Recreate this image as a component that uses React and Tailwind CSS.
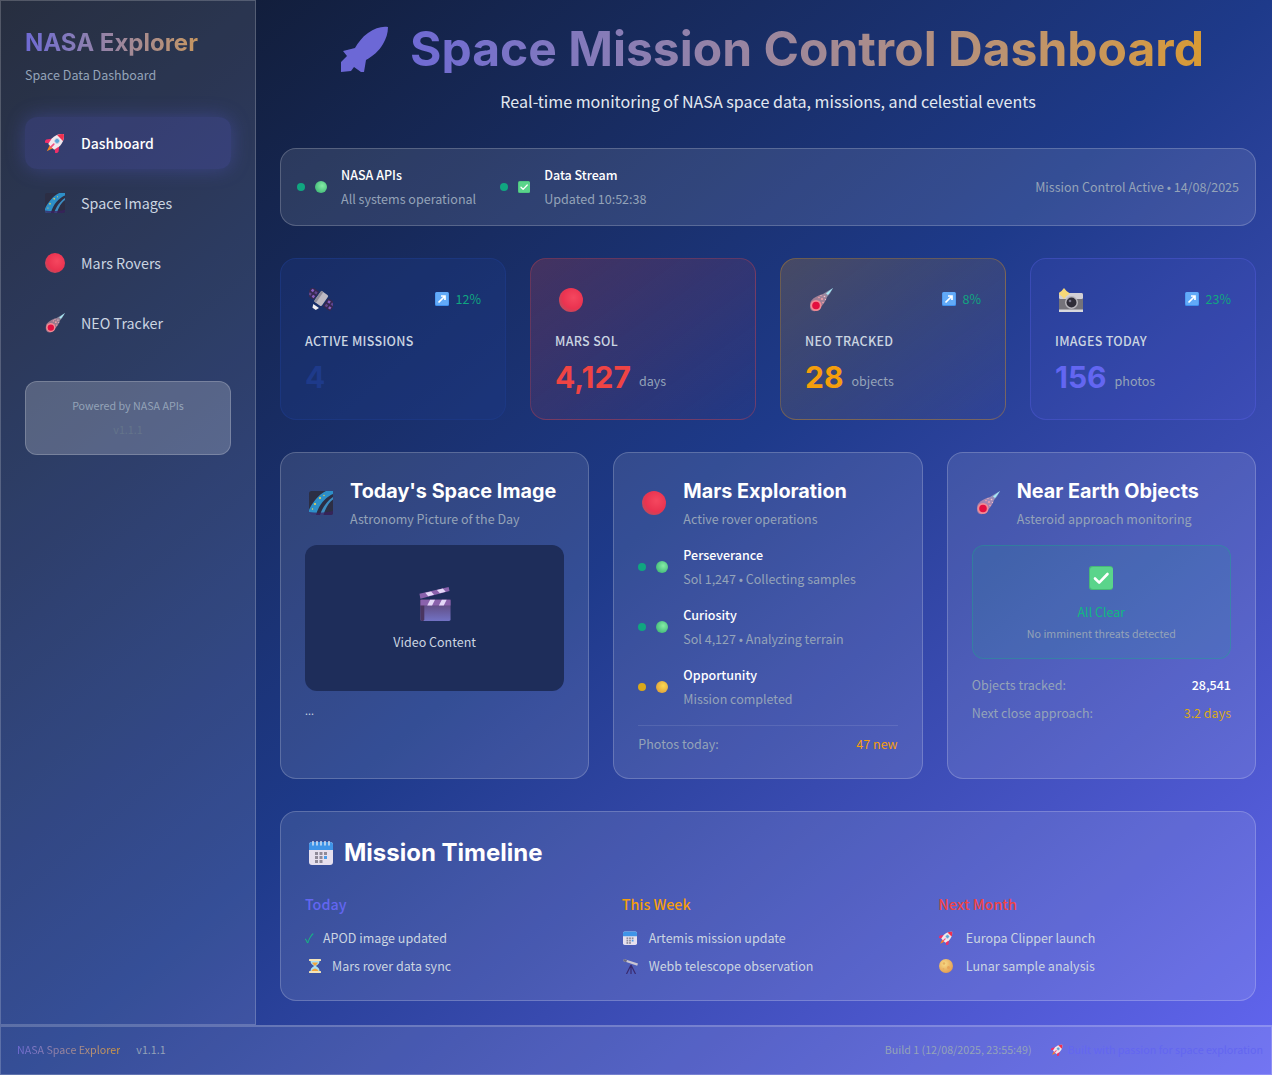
import React from "react";

const grad = "bg-gradient-to-r from-[#6f6ad4] to-[#d89a32] bg-clip-text text-transparent";

// emoji style icons, drawn by hand
const RedBall = ({ className }) => (
    <svg viewBox="0 0 24 24" className={className}>
        <defs>
            <radialGradient id="redball" cx="0.6" cy="0.4" r="0.65">
                <stop offset="0" stopColor="#f5475f" />
                <stop offset="0.7" stopColor="#ea3350" />
                <stop offset="1" stopColor="#bf4a5c" />
            </radialGradient>
        </defs>
        <circle cx="12" cy="12" r="12" fill="url(#redball)" />
    </svg>
);

const GreenBall = ({ className }) => (
    <svg viewBox="0 0 12 12" className={className}>
        <defs>
            <radialGradient id="greenball" cx="0.6" cy="0.4" r="0.65">
                <stop offset="0" stopColor="#86eba6" />
                <stop offset="1" stopColor="#42ba78" />
            </radialGradient>
        </defs>
        <circle cx="6" cy="6" r="6" fill="url(#greenball)" />
    </svg>
);

const YellowBall = ({ className }) => (
    <svg viewBox="0 0 12 12" className={className}>
        <defs>
            <radialGradient id="yellowball" cx="0.6" cy="0.4" r="0.65">
                <stop offset="0" stopColor="#fbd850" />
                <stop offset="1" stopColor="#e0a23c" />
            </radialGradient>
        </defs>
        <circle cx="6" cy="6" r="6" fill="url(#yellowball)" />
    </svg>
);

const CheckBox = ({ className }) => (
    <svg viewBox="0 0 24 24" className={className}>
        <rect width="24" height="24" rx="3" fill="#47b877" />
        <rect x="1" y="1" width="23" height="22" rx="3" fill="#5ad48b" />
        <path d="M6 12.5l4.2 4.2L18.5 8" fill="none" stroke="#fff" strokeWidth="2.6" strokeLinecap="round" strokeLinejoin="round" />
    </svg>
);

const Rocket = ({ className }) => (
    <svg viewBox="0 0 24 24" className={className}>
        <g transform="rotate(45 12 12)">
            <path d="M9 17h6L12 26z" fill="#f58220" />
            <path d="M6.500 10L1.500 16.500 2 21.500 7.500 17z" fill="#ef2f68" />
            <path d="M17.500 10l5 6.500-.5 5-5.500-4.500z" fill="#ef2f68" />
            <path d="M12 -3C17 1 18.500 6 18.500 11L17 18.500H7L5.500 11C5.500 6 7 1 12 -3z" fill="#f1e6ed" />
            <path d="M12 -3C14.400 -1 16 1 17 3.500H7C8 1 9.600 -1 12 -3z" fill="#f0304f" />
            <circle cx="12" cy="8.500" r="3" fill="#5aa3d6" stroke="#c5d3e4" strokeWidth="1" />
            <rect x="11" y="13" width="2" height="7" rx="1" fill="#ef4f80" />
        </g>
    </svg>
);

const TitleRocket = ({ className }) => (
    <svg viewBox="0 0 47 47" className={className}>
        <path d="M47 1C41 0 34 2 27 7C21 11 17 17 14 22L2 25L6 30L0 36V46L10 45L13 41L20 46H23L25 34C32 30 38 25 42 18C45 13 47 7 47 1Z" fill="#6c68d6" />
    </svg>
);

const Galaxy = ({ className }) => (
    <svg viewBox="0 0 24 24" className={className}>
        <rect width="24" height="24" rx="2.5" fill="#2c2e44" />
        <path d="M0 19C3 12 10 3 17 0h7v3C17 6 10 13 7 24H2.5Q0 24 0 21.5z" fill="#2d8fc8" />
        <path d="M11 24C13 17 18 10 24 6v2.5C20 11 16 18 14.5 24z" fill="#3d8cc0" />
        <path d="M0 21v.5Q0 24 2.5 24h19q2.500 0 2.500-2.500V20C16 22 8 22 0 21z" fill="#3a2260" opacity="0.75" />
        <circle cx="11" cy="7" r="1" fill="#f4d44a" />
        <circle cx="15" cy="4.500" r="0.7" fill="#f4d44a" />
        <circle cx="6" cy="13" r="1" fill="#f4d44a" />
        <circle cx="3.500" cy="18" r="0.7" fill="#f4d44a" />
    </svg>
);

const Comet = ({ className }) => (
    <svg viewBox="0 0 24 24" className={className}>
        <defs>
            <linearGradient id="cometTail" x1="0" y1="1" x2="1" y2="0">
                <stop offset="0" stopColor="#f59aa2" />
                <stop offset="0.6" stopColor="#f3b4bc" />
                <stop offset="1" stopColor="#9fe6f5" />
            </linearGradient>
        </defs>
        <path d="M2 13C5 9 10 7 14 6L18 3.500L24 0L21 5.500L18 9C17 13 14 17 10 21C7 24 3 24 1.500 21C.5 19 1 15 2 13z" fill="url(#cometTail)" opacity="0.55" />
        <path d="M17 5.500L24 0L19 7z" fill="#a8ecf8" />
        <circle cx="7" cy="17.500" r="5.500" fill="#f28a94" />
        <circle cx="7" cy="17.500" r="3.800" fill="#e3103f" />
        <circle cx="13" cy="11" r="1" fill="#f5a0a8" />
        <circle cx="15.500" cy="8.500" r="0.800" fill="#f8c0c8" />
        <circle cx="10" cy="9.500" r="0.800" fill="#f5a0a8" />
        <circle cx="14" cy="14.500" r="0.800" fill="#f5a0a8" />
        <circle cx="12" cy="7.500" r="0.600" fill="#f8c0c8" />
        <circle cx="16.500" cy="11.500" r="0.600" fill="#f8c0c8" />
    </svg>
);

const Satellite = ({ className }) => (
    <svg viewBox="0 0 24 24" className={className}>
        <g transform="rotate(35 12 11)">
            <rect x="-2.500" y="6" width="9" height="10" rx="1" fill="#36294f" />
            <rect x="17.500" y="6" width="9" height="10" rx="1" fill="#36294f" />
            <rect x="-1" y="7.500" width="2.500" height="2.500" fill="#8a5fc4" />
            <rect x="3" y="7.500" width="2.500" height="2.500" fill="#5f4590" />
            <rect x="-1" y="12" width="2.500" height="2.500" fill="#5f4590" />
            <rect x="3" y="12" width="2.500" height="2.500" fill="#8a5fc4" />
            <rect x="19" y="7.500" width="2.500" height="2.500" fill="#8a5fc4" />
            <rect x="23" y="7.500" width="2.500" height="2.500" fill="#5f4590" />
            <rect x="19" y="12" width="2.500" height="2.500" fill="#5f4590" />
            <rect x="23" y="12" width="2.500" height="2.500" fill="#8a5fc4" />
            <rect x="7.500" y="4" width="9" height="13" rx="1.500" fill="#bdb9c2" />
            <rect x="7.500" y="4" width="2.500" height="13" fill="#8f8b98" />
            <path d="M8.500 19.500h7l-1.500 3.500h-4z" fill="#f2eff2" />
        </g>
    </svg>
);

const Camera = ({ className }) => (
    <svg viewBox="0 0 24 24" className={className}>
        <rect y="5" width="24" height="19" rx="1.500" fill="#75737a" />
        <rect y="5" width="24" height="6" rx="1.500" fill="#d2d0d6" />
        <rect y="21.500" width="24" height="2.500" fill="#d8d8dc" />
        <circle cx="12.500" cy="14.500" r="6.500" fill="#b8b6bc" />
        <circle cx="12.500" cy="14.500" r="5" fill="#2f2d38" />
        <circle cx="11" cy="13" r="1.300" fill="#77758a" />
        <path d="M5 0L7.500 3L11 5.500L7.500 8L5 11L2.500 8L-1 5.500L2.500 3z" fill="#f6d878" />
    </svg>
);

const Clapper = ({ className }) => (
    <svg viewBox="0 0 32 36" className={className}>
        <defs>
            <linearGradient id="clapBody" x1="0" y1="0" x2="0" y2="1">
                <stop offset="0" stopColor="#5c4270" />
                <stop offset="1" stopColor="#7272c4" />
            </linearGradient>
        </defs>
        <rect x="1" y="13" width="31" height="22" rx="1.500" fill="url(#clapBody)" />
        <rect x="1" y="13" width="4" height="22" rx="1.500" fill="#4a3560" />
        <rect x="1" y="13" width="31" height="6" fill="#8a62ac" />
        <path d="M8 19l3-6h5l-3 6zM20 19l3-6h5l-3 6z" fill="#e4d8f8" />
        <path d="M0 7L30 0l1 4L1 12z" fill="#8a62ac" />
        <path d="M6 6l6-1.500 3 3.500-6 1.500zM18 3l6-1.500 3 3.500-6 1.500z" fill="#e4d8f8" />
    </svg>
);

const Calendar = ({ className, rings }) => (
    <svg viewBox="0 0 24 24" className={className}>
        <rect y="1" width="24" height="23" rx="3" fill="#e6e0ee" />
        <path d="M0 4Q0 1 3 1h18q3 0 3 3v5H0z" fill="#3f94e8" />
        {rings && <path d="M4 0v4M8 0v4M12 0v4M16 0v4M20 0v4" stroke="#dfe6f2" strokeWidth="1.400" strokeLinecap="round" />}
        <g fill="#8f8a98">
            <rect x="6" y="11" width="3" height="3" />
            <rect x="10.500" y="11" width="3" height="3" />
            <rect x="15" y="11" width="3" height="3" />
            <rect x="6" y="15" width="3" height="3" />
            <rect x="10.500" y="15" width="3" height="3" />
            <rect x="15" y="15" width="3" height="3" fill="#4a9be8" />
            <rect x="6" y="19" width="3" height="3" />
            <rect x="10.500" y="19" width="3" height="3" />
        </g>
    </svg>
);

const Hourglass = ({ className }) => (
    <svg viewBox="0 0 12 14" className={className}>
        <rect width="12" height="2" rx="0.500" fill="#f3e3b8" />
        <rect y="12" width="12" height="2" rx="0.500" fill="#f3e3b8" />
        <path d="M1.500 2h9C10.500 5 8 6 7 7c1 1 3.500 2 3.500 5h-9C1.500 9 4 8 5 7 4 6 1.500 5 1.500 2z" fill="#a8dff2" />
        <path d="M3 3.500h6C8.500 5 6.800 6 6 7 5.200 6 3.500 5 3 3.500zM2.500 12C3 10.500 5 9.500 6 9.500s3 1 3.500 2.500z" fill="#f2a53c" />
    </svg>
);

const Telescope = ({ className }) => (
    <svg viewBox="0 0 16 16" className={className}>
        <path d="M8 7L3.500 16M8 7l4.500 9M8 7v9" stroke="#3a2a70" strokeWidth="1.200" fill="none" />
        <path d="M1 1l14 4.500-.8 2.300L0.200 3z" fill="#c9c5d2" />
        <path d="M1 1L4 2l-.8 2.200L.2 3z" fill="#6a6a82" />
    </svg>
);

const Moon = ({ className }) => (
    <svg viewBox="0 0 14 14" className={className}>
        <defs>
            <radialGradient id="moonball" cx="0.4" cy="0.35" r="0.7">
                <stop offset="0" stopColor="#f8dd86" />
                <stop offset="1" stopColor="#e29a50" />
            </radialGradient>
        </defs>
        <circle cx="7" cy="7" r="7" fill="url(#moonball)" />
        <circle cx="5" cy="4.500" r="1.300" fill="#e6b060" />
        <circle cx="9.500" cy="8.500" r="1.500" fill="#e6a458" />
        <circle cx="4.500" cy="10" r="0.900" fill="#e6b060" />
    </svg>
);

const TrendArrow = ({ className }) => (
    <svg viewBox="0 0 14 14" className={className}>
        <rect width="14" height="14" rx="1.500" fill="#3d8eee" />
        <rect x="0.500" y="0" width="13" height="13" rx="1.500" fill="#62aaf8" />
        <path d="M3.500 10.500L9.500 4.500M6 4h4v4" fill="none" stroke="#fff" strokeWidth="1.700" />
    </svg>
);

const NavItem = ({ icon, label, active }) => (
    <div className={`flex items-center gap-4 h-[52px] pl-5 rounded-xl ${active ? "text-[14px] bg-[rgba(99,102,241,0.2)] shadow-[0_0_20px_rgba(99,102,241,0.3)] text-white font-medium" : "text-[14.3px] text-[#cbd5e1]"}`}>
        {icon}
        <span>{label}</span>
    </div>
);

const StatusGroup = ({ icon, title, sub, dotClass }) => (
    <div className="flex items-center">
        <span className={`w-2 h-2 rounded-full ${dotClass}`}></span>
        <span className="ml-2.5 mr-3.5">{icon}</span>
        <div>
            <p className="text-[12.5px] font-medium text-white leading-[20px] mb-[4px]">{title}</p>
            <p className="text-[12.55px] text-[#94a3b8] leading-[20px]">{sub}</p>
        </div>
    </div>
);

const StatCard = ({ icon, trend, label, value, unit, valueClass, cardClass }) => (
    <div className={`h-[162px] rounded-2xl border p-6 ${cardClass}`}>
        <div className="flex items-center justify-between h-[34px]">
            <span className="ml-1">{icon}</span>
            {trend && (
                <span className="flex items-center gap-[7px] text-[#10a680] text-[12.5px] -translate-y-px">
                    <TrendArrow className="w-3.5 h-3.5" />{trend}
                </span>
            )}
        </div>
        <p className="mt-3 text-[12.5px] font-medium text-[#cbd5e1] uppercase tracking-wide leading-[24px]">{label}</p>
        <div className="mt-1 flex items-baseline gap-2">
            <span className={`text-3xl font-bold leading-[40px] font-['Inter'] ${valueClass}`}>{value}</span>
            {unit && <span className="text-[12.5px] text-[#94a3b8] -translate-y-0.5">{unit}</span>}
        </div>
    </div>
);

const PanelHead = ({ icon, title, sub, gapClass = "mb-4" }) => (
    <div className={`flex items-center ${gapClass}`}>
        <span className="ml-1 mr-[17px]">{icon}</span>
        <div>
            <h3 className="text-[19.8px] font-bold text-white font-['Inter'] leading-[28px]">{title}</h3>
            <p className="text-[12.5px] text-[#94a3b8] leading-[20px] mt-1">{sub}</p>
        </div>
    </div>
);

const Rover = ({ name, info, dotClass, icon }) => (
    <div className="flex items-center h-[60px]">
        <span className={`w-2 h-2 rounded-full ${dotClass}`}></span>
        <span className="ml-2.5 mr-[15px]">{icon}</span>
        <div>
            <p className="text-[12.5px] font-medium text-white leading-[20px] mb-[4px]">{name}</p>
            <p className="text-[12.5px] text-[#94a3b8] leading-[20px]">{info}</p>
        </div>
    </div>
);

const TimelineCol = ({ title, titleClass, items }) => (
    <div>
        <h4 className={`text-[14.3px] font-medium leading-[24px] mb-3 ${titleClass}`}>{title}</h4>
        <div className="space-y-2">
            {items.map((item, idx) => (
                <div key={idx} className="flex items-center text-[12.5px] text-[#cbd5e1] h-[20px]">
                    {item.icon}
                    <span>{item.label}</span>
                </div>
            ))}
        </div>
    </div>
);

const App = () => {
    return (
        <div className="w-full h-[1075px] overflow-hidden flex flex-col bg-gradient-to-br from-[#0f172a] via-[#1e3a8a] to-[#6366f1] font-['Noto_Sans_CJK_JP','Noto_Sans',sans-serif]">
            <div className="flex h-[1025px]">
                <aside className="w-[256px] shrink-0 bg-white/10 border border-white/20 p-6">
                    <h2 className={`text-2xl font-bold font-['Inter'] leading-[32px] mt-0.5 ${grad}`}>NASA Explorer</h2>
                    <p className="text-[12.5px] text-[#94a3b8] mt-1.5 leading-[20px]">Space Data Dashboard</p>
                    <nav className="mt-8 space-y-2">
                        <NavItem icon={<Rocket className="w-5 h-5" />} label="Dashboard" active />
                        <NavItem icon={<Galaxy className="w-5 h-5" />} label="Space Images" />
                        <NavItem icon={<RedBall className="w-5 h-5" />} label="Mars Rovers" />
                        <NavItem icon={<Comet className="w-5 h-5" />} label="NEO Tracker" />
                    </nav>
                    <div className="mt-8 h-[74px] rounded-xl bg-white/20 border border-white/20 flex flex-col items-center justify-center gap-2">
                        <p className="text-[10.7px] text-[#94a3b8] leading-[16px]">Powered by NASA APIs</p>
                        <p className="text-[10.7px] text-[#64748b] leading-[16px]">v1.1.1</p>
                    </div>
                </aside>
                <main className="flex-1 min-w-0 pl-6 pr-4 pt-6 space-y-8">
                    <header className="text-center h-[92px] pt-px">
                        <h1 className="flex justify-center items-center text-5xl font-bold font-['Inter'] leading-[48px]">
                            <TitleRocket className="w-[47px] h-[47px] ml-[9px] mr-[22px]" />
                            <span className={grad}>Space Mission Control Dashboard</span>
                        </h1>
                        <p className="text-[16.1px] text-[#e2e8f0] mt-4 leading-[24px]">Real-time monitoring of NASA space data, missions, and celestial events</p>
                    </header>
                    <section className="h-[78px] rounded-2xl bg-white/10 border border-white/20 px-4 flex items-center justify-between">
                        <div className="flex items-center gap-6">
                            <StatusGroup dotClass="bg-[#10a680]" icon={<GreenBall className="w-3 h-3" />} title="NASA APIs" sub="All systems operational" />
                            <StatusGroup dotClass="bg-[#10a680]" icon={<CheckBox className="w-3 h-3" />} title="Data Stream" sub="Updated 10:52:38" />
                        </div>
                        <p className="text-[12.5px] text-[#94a3b8]">Mission Control Active • 14/08/2025</p>
                    </section>
                    <section className="grid grid-cols-4 gap-6">
                        <StatCard icon={<Satellite className="w-6 h-6" />} trend="12%" label="Active Missions" value="4" valueClass="text-[#1e3a8a]" cardClass="bg-[rgba(30,58,138,0.3)] border-[rgba(30,58,138,0.6)]" />
                        <StatCard icon={<RedBall className="w-6 h-6" />} label="Mars Sol" value="4,127" unit="days" valueClass="text-[#ef4444]" cardClass="bg-gradient-to-br from-[rgba(239,68,68,0.2)] to-[rgba(239,68,68,0.02)] border-[rgba(239,68,68,0.3)]" />
                        <StatCard icon={<Comet className="w-6 h-6" />} trend="8%" label="NEO Tracked" value="28" unit="objects" valueClass="text-[#f59e0b]" cardClass="bg-gradient-to-br from-[rgba(245,158,11,0.2)] to-[rgba(245,158,11,0.02)] border-[rgba(245,158,11,0.3)]" />
                        <StatCard icon={<Camera className="w-6 h-6" />} trend="23%" label="Images Today" value="156" unit="photos" valueClass="text-[#6366f1]" cardClass="bg-[rgba(99,102,241,0.1)] border-[rgba(99,102,241,0.3)]" />
                    </section>
                    <section className="grid grid-cols-3 gap-6">
                        <div className="h-[327px] rounded-2xl bg-white/10 border border-white/20 p-6">
                            <PanelHead icon={<Galaxy className="w-6 h-6" />} title="Today's Space Image" sub="Astronomy Picture of the Day" />
                            <div className="h-[146px] pt-[3px] rounded-xl bg-[#1e2d5a] flex flex-col items-center justify-center">
                                <Clapper className="w-8 h-[35px] mb-2.5" />
                                <p className="text-[12.5px] text-[#cbd5e1] leading-[20px]">Video Content</p>
                            </div>
                            <p className="text-[10.7px] text-[#cbd5e1] mt-3 leading-[16px]">...</p>
                        </div>
                        <div className="h-[327px] rounded-2xl bg-white/10 border border-white/20 p-6">
                            <PanelHead icon={<RedBall className="w-6 h-6" />} title="Mars Exploration" sub="Active rover operations" gapClass="mb-2" />
                            <Rover name="Perseverance" info="Sol 1,247 • Collecting samples" dotClass="bg-[#10a680]" icon={<GreenBall className="w-3 h-3" />} />
                            <Rover name="Curiosity" info="Sol 4,127 • Analyzing terrain" dotClass="bg-[#10a680]" icon={<GreenBall className="w-3 h-3" />} />
                            <Rover name="Opportunity" info="Mission completed" dotClass="bg-[#d9a81a]" icon={<YellowBall className="w-3 h-3" />} />
                            <div className="mt-2 pt-2 border-t border-white/10 flex justify-between text-[12.5px] leading-[20px]">
                                <span className="text-[#94a3b8]">Photos today:</span>
                                <span className="text-[#f59e0b]">47 new</span>
                            </div>
                        </div>
                        <div className="h-[327px] rounded-2xl bg-white/10 border border-white/20 p-6">
                            <PanelHead icon={<Comet className="w-6 h-6" />} title="Near Earth Objects" sub="Asteroid approach monitoring" />
                            <div className="h-[114px] pt-5 rounded-xl bg-[rgba(16,185,129,0.1)] border border-[rgba(16,185,129,0.3)] flex flex-col items-center">
                                <CheckBox className="w-6 h-6" />
                                <p className="text-[12.5px] text-[#10b981] mt-3 leading-[20px]">All Clear</p>
                                <p className="text-[10.7px] text-[#94a3b8] mt-1 leading-[16px]">No imminent threats detected</p>
                            </div>
                            <div className="mt-4 space-y-2 text-[12.5px] leading-[20px]">
                                <div className="flex justify-between"><span className="text-[#94a3b8]">Objects tracked:</span><span className="text-white font-medium">28,541</span></div>
                                <div className="flex justify-between"><span className="text-[#94a3b8]">Next close approach:</span><span className="text-[#d9a81a]">3.2 days</span></div>
                            </div>
                        </div>
                    </section>
                    <section className="h-[190px] rounded-2xl bg-white/10 border border-white/20 p-6">
                        <h3 className="flex items-center text-2xl font-bold text-white font-['Inter'] leading-[32px] mt-px mb-[23px]">
                            <Calendar rings className="w-6 h-6 ml-1 mr-[11px]" />Mission Timeline
                        </h3>
                        <div className="grid grid-cols-3 gap-6">
                            <TimelineCol title="Today" titleClass="text-[#6366f1]" items={[
                                { icon: <span className="w-[18px] text-[#10b981]">✓</span>, label: "APOD image updated" },
                                { icon: <Hourglass className="w-3 h-3.5 ml-1 mr-[11px]" />, label: "Mars rover data sync" },
                            ]} />
                            <TimelineCol title="This Week" titleClass="text-[#f59e0b]" items={[
                                { icon: <Calendar className="w-3.5 h-3.5 ml-px mr-3" />, label: "Artemis mission update" },
                                { icon: <Telescope className="w-4 h-4 ml-px mr-2.5" />, label: "Webb telescope observation" },
                            ]} />
                            <TimelineCol title="Next Month" titleClass="text-[#ef4444]" items={[
                                { icon: <Rocket className="w-3.5 h-3.5 ml-px mr-[12.5px]" />, label: "Europa Clipper launch" },
                                { icon: <Moon className="w-3.5 h-3.5 ml-px mr-[12.5px]" />, label: "Lunar sample analysis" },
                            ]} />
                        </div>
                    </section>
                </main>
            </div>
            <footer className="h-[50px] pb-px bg-white/10 border border-white/20 border-t-2 pl-4 pr-2 flex items-center justify-between text-[10.7px]">
                <div className="flex items-center gap-4">
                    <span className={grad}>NASA Space Explorer</span>
                    <span className="text-[#94a3b8]">v1.1.1</span>
                </div>
                <div className="flex items-center">
                    <span className="text-[#94a3b8] mr-[19px]">Build 1 (12/08/2025, 23:55:49)</span>
                    <Rocket className="w-3 h-3 mr-[5px]" />
                    <span className="text-[#6366f1] whitespace-nowrap">Built with passion for space exploration</span>
                </div>
            </footer>
        </div>
    );
};

export default App;
